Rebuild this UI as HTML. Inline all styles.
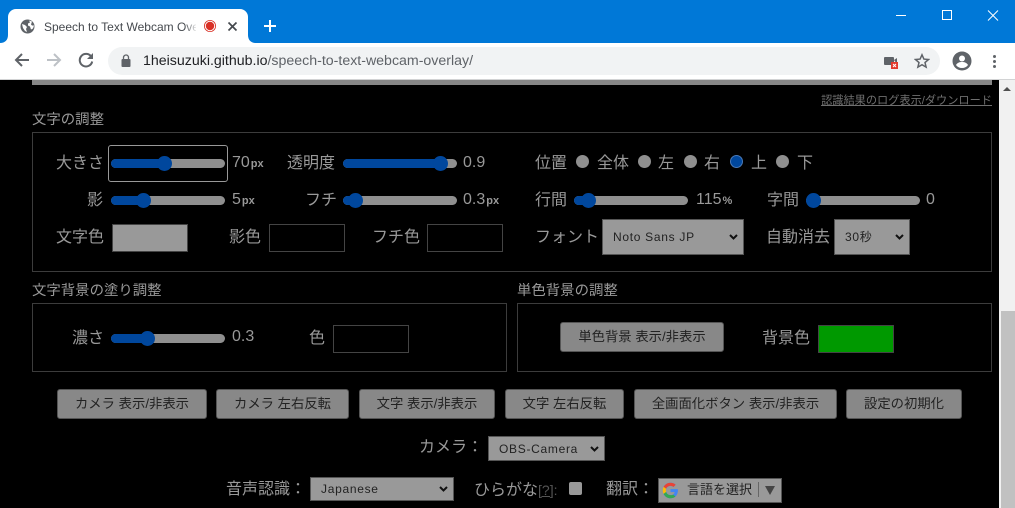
<!DOCTYPE html>
<html lang="ja"><head><meta charset="utf-8"><title>Speech to Text Webcam Overlay</title>
<style>
html,body{margin:0;padding:0;width:1015px;height:508px;overflow:hidden;background:#000}
body{position:relative;font-family:"Liberation Sans","Noto Sans CJK JP",sans-serif;color:#999}
.a{position:absolute}
.t{position:absolute;white-space:nowrap;height:20px;line-height:20px;font-size:16px;font-family:"Liberation Sans","Noto Sans CJK JP",sans-serif;color:#999}
.t small{font-size:11px;font-weight:bold;margin-left:1px}
.h{font-size:14.4px}
.p{position:absolute;border:1px solid #3c3c3c;box-sizing:border-box}
.c{position:absolute;border:1px solid #444;box-sizing:border-box;width:76px;height:28px}
.tr{position:absolute;height:9px;border-radius:5px;background:#8f8f8f;overflow:hidden}
.tr i{position:absolute;left:0;top:0;bottom:0;background:#00479d}
.th{position:absolute;width:15px;height:15px;border-radius:50%;background:#00479d}
.r{position:absolute;width:13px;height:13px;border-radius:50%;background:#8f8f8f}
.b{position:absolute;box-sizing:border-box;height:30px;line-height:28px;text-align:center;background:#888;border:1px solid #555;border-radius:3px;color:#222;font-size:13.33px;white-space:nowrap}
.s{position:absolute;box-sizing:border-box;background:#999;border:1px solid #555;color:#222;font-size:12px;letter-spacing:.7px;white-space:nowrap}
.s svg{position:absolute;top:50%;margin-top:-3px;right:5px}
</style></head><body>
<!-- browser chrome -->
<div class="a" style="left:0;top:0;width:1015px;height:43px;background:#0078d7"></div>
<div class="a" style="left:8px;top:9px;width:240px;height:34px;background:#fff;border-radius:8px 8px 0 0"></div>
<svg class="a" style="left:0;top:35px" width="8" height="8"><path d="M0 8H8V0C8 5 5 8 0 8Z" fill="#fff"/></svg>
<svg class="a" style="left:248px;top:35px" width="8" height="8"><path d="M0 0V8H8C3 8 0 5 0 0Z" fill="#fff"/></svg>
<svg class="a" style="left:20px;top:19px" width="15" height="15" viewBox="0 0 15 15"><circle cx="7.500" cy="7.500" r="7" fill="#5f6368"/><path d="M2 5l3 1 2 2-1 2 1 3-2-1-2-3zM9 1.500l3 1-1 3 1 1 2 0-1 3-2 1-1-3-2-1 0-2 2-1z" fill="#fff"/></svg>
<div class="a" style="left:44px;top:19px;width:152px;height:16px;overflow:hidden;font-size:12px;line-height:16px;color:#45494e;white-space:nowrap">Speech to Text Webcam Overlay</div>
<div class="a" style="left:184px;top:19px;width:14px;height:16px;background:linear-gradient(90deg,rgba(255,255,255,0),#fff)"></div>
<svg class="a" style="left:203px;top:19px" width="14" height="14"><circle cx="7" cy="7" r="6" fill="#d93025"/><circle cx="7" cy="7" r="4.700" fill="none" stroke="#fff" stroke-width="1"/></svg>
<svg class="a" style="left:227px;top:21px" width="11" height="11"><path d="M1.500 1.500l8 8M9.500 1.500l-8 8" stroke="#45494e" stroke-width="1.700"/></svg>
<svg class="a" style="left:263px;top:19px" width="14" height="14"><path d="M7 1v12M1 7h12" stroke="#fff" stroke-width="2"/></svg>
<svg class="a" style="left:895px;top:9px" width="110" height="14" fill="none" stroke="#fff" stroke-width="1"><path d="M1 6.500h10M47.500 1.500h9v9h-9zM93 1.500l10 10M103 1.500l-10 10"/></svg>
<div class="a" style="left:0;top:43px;width:1015px;height:36px;background:#fff"></div>
<div class="a" style="left:0;top:79px;width:1015px;height:1px;background:#d2d3d4"></div>
<svg class="a" style="left:14px;top:52px" width="16" height="16" fill="none" stroke="#5f6368" stroke-width="2"><path d="M15 8H2M8 2L2 8l6 6"/></svg>
<svg class="a" style="left:46px;top:52px" width="16" height="16" fill="none" stroke="#bdc1c6" stroke-width="2"><path d="M1 8h13M8 2l6 6-6 6"/></svg>
<svg class="a" style="left:78px;top:52px" width="16" height="16" fill="none"><path d="M13.500 5A6.300 6.300 0 1 0 14.200 9.500" stroke="#5f6368" stroke-width="2"/><path d="M15 1v6H9z" fill="#5f6368"/></svg>
<div class="a" style="left:108px;top:47px;width:832px;height:28px;background:#f1f3f4;border-radius:14px"></div>
<svg class="a" style="left:121px;top:54px" width="10" height="13"><rect x="0.500" y="5" width="9" height="8" rx="1" fill="#5f6368"/><path d="M2.500 5V3.500a2.500 2.500 0 0 1 5 0V5" fill="none" stroke="#5f6368" stroke-width="1.300"/></svg>
<div class="a" style="left:143px;top:52px;font-size:14.18px;line-height:18px;white-space:nowrap;color:#5f6368"><span style="color:#202124">1heisuzuki.github.io</span>/speech-to-text-webcam-overlay/</div>
<svg class="a" style="left:883px;top:56px" width="16" height="14"><rect x="1" y="1" width="10" height="8" rx="1" fill="#5f6368"/><path d="M11 4l3-2v6" fill="#5f6368"/><rect x="8" y="6" width="7" height="7" fill="#e33b2e"/><path d="M10 8l3 3M13 8l-3 3" stroke="#fff"/></svg>
<svg class="a" style="left:914px;top:53px" width="16" height="16"><path d="M8 1.800l1.900 4.300 4.600.4-3.500 3 1.100 4.600L8 11.700 3.900 14.100 5 9.500 1.500 6.500l4.600-.4z" fill="none" stroke="#5f6368" stroke-width="1.500"/></svg>
<svg class="a" style="left:952px;top:51px" width="20" height="20"><circle cx="10" cy="10" r="9.500" fill="#5f6368"/><circle cx="10" cy="7.500" r="3" fill="#fff"/><path d="M4 14c1.500-2.500 3.500-3 6-3s4.500.5 6 3c-1.500 2-3.500 3-6 3s-4.500-1-6-3z" fill="#fff"/></svg>
<svg class="a" style="left:992px;top:54px" width="5" height="15" fill="#5f6368"><circle cx="2.500" cy="2.500" r="1.500"/><circle cx="2.500" cy="7.500" r="1.500"/><circle cx="2.500" cy="12.500" r="1.500"/></svg>
<!-- scrollbar -->
<div class="a" style="left:999px;top:80px;width:16px;height:428px;background:#f1f1f1"></div>
<div class="a" style="left:1001px;top:311px;width:14px;height:197px;background:#c1c1c1"></div>
<svg class="a" style="left:1003px;top:86px" width="9" height="6"><path d="M0 5L4 1l4 4z" fill="#505050"/></svg>
<!-- page -->
<div class="a" style="left:32px;top:80px;width:960px;height:5px;background:#878787"></div>
<div class="t" style="right:23px;top:92px;font-size:11.2px;color:#6f6f6f;text-decoration:underline;height:18px;line-height:18px">認識結果のログ表示/ダウンロード</div>
<div class="t h" style="left:32px;top:110px">文字の調整</div>
<div class="p" style="left:32px;top:132px;width:960px;height:140px"></div>
<div class="a" style="left:108px;top:145px;width:120px;height:37px;box-sizing:border-box;border:1px solid #999;border-radius:3px"></div>
<div class="t" style="left:56px;top:154px">大きさ</div>
<div class="tr" style="left:111px;top:159px;width:114px"><i style="width:53px"></i></div><div class="th" style="left:157px;top:156px"></div>
<div class="t" style="left:232px;top:153px">70<small>px</small></div>
<div class="t" style="left:287px;top:154px">透明度</div>
<div class="tr" style="left:343px;top:159px;width:114px"><i style="width:97px"></i></div><div class="th" style="left:433px;top:156px"></div>
<div class="t" style="left:463px;top:153px">0.9</div>
<div class="t" style="left:535px;top:154px">位置</div>
<div class="r" style="left:576px;top:155px"></div><div class="t" style="left:597px;top:154px">全体</div>
<div class="r" style="left:638px;top:155px"></div><div class="t" style="left:658px;top:154px">左</div>
<div class="r" style="left:684px;top:155px"></div><div class="t" style="left:704px;top:154px">右</div>
<div class="a" style="left:730px;top:155px;width:13px;height:13px;box-sizing:border-box;border-radius:50%;background:#00479d;border:1.500px solid #4a7ab8"></div><div class="t" style="left:751px;top:154px">上</div>
<div class="r" style="left:776px;top:155px"></div><div class="t" style="left:797px;top:154px">下</div>
<div class="t" style="left:87px;top:191px">影</div>
<div class="tr" style="left:111px;top:196px;width:114px"><i style="width:32px"></i></div><div class="th" style="left:136px;top:193px"></div>
<div class="t" style="left:232px;top:190px">5<small>px</small></div>
<div class="t" style="left:305px;top:191px">フチ</div>
<div class="tr" style="left:343px;top:196px;width:114px"><i style="width:13px"></i></div><div class="th" style="left:348px;top:193px"></div>
<div class="t" style="left:463px;top:190px">0.3<small>px</small></div>
<div class="t" style="left:535px;top:191px">行間</div>
<div class="tr" style="left:574px;top:196px;width:114px"><i style="width:15px"></i></div><div class="th" style="left:581px;top:193px"></div>
<div class="t" style="left:696px;top:190px">115<small>%</small></div>
<div class="t" style="left:767px;top:191px">字間</div>
<div class="tr" style="left:806px;top:196px;width:114px"></div><div class="th" style="left:806px;top:193px"></div>
<div class="t" style="left:926px;top:190px">0</div>
<div class="t" style="left:56px;top:228px">文字色</div>
<div class="c" style="left:112px;top:224px;background:#999"></div>
<div class="t" style="left:229px;top:228px">影色</div>
<div class="c" style="left:269px;top:224px"></div>
<div class="t" style="left:372px;top:228px">フチ色</div>
<div class="c" style="left:427px;top:224px"></div>
<div class="t" style="left:535px;top:228px">フォント</div>
<div class="s" style="left:602px;top:219px;width:142px;height:36px;line-height:35px;padding-left:10px">Noto Sans JP<svg width="9" height="6"><path d="M1 1l3.500 3.500L8 1" fill="none" stroke="#111" stroke-width="2"/></svg></div>
<div class="t" style="left:766px;top:228px">自動消去</div>
<div class="s" style="left:834px;top:219px;width:76px;height:36px;line-height:35px;padding-left:10px">30秒<svg width="9" height="6"><path d="M1 1l3.500 3.500L8 1" fill="none" stroke="#111" stroke-width="2"/></svg></div>
<div class="t h" style="left:32px;top:281px">文字背景の塗り調整</div>
<div class="t h" style="left:517px;top:281px">単色背景の調整</div>
<div class="p" style="left:32px;top:303px;width:475px;height:69px"></div>
<div class="p" style="left:517px;top:303px;width:475px;height:69px"></div>
<div class="t" style="left:72px;top:329px">濃さ</div>
<div class="tr" style="left:111px;top:334px;width:114px"><i style="width:37px"></i></div><div class="th" style="left:140px;top:331px"></div>
<div class="t" style="left:232px;top:327px">0.3</div>
<div class="t" style="left:309px;top:329px">色</div>
<div class="c" style="left:333px;top:325px"></div>
<div class="b" style="left:560px;top:322px;width:164px">単色背景 表示/非表示</div>
<div class="t" style="left:762px;top:329px">背景色</div>
<div class="c" style="left:818px;top:325px;background:#009900"></div>
<div class="b" style="left:57px;top:389px;width:150px">カメラ 表示/非表示</div>
<div class="b" style="left:216px;top:389px;width:133px">カメラ 左右反転</div>
<div class="b" style="left:359px;top:389px;width:136px">文字 表示/非表示</div>
<div class="b" style="left:505px;top:389px;width:119px">文字 左右反転</div>
<div class="b" style="left:634px;top:389px;width:203px">全画面化ボタン 表示/非表示</div>
<div class="b" style="left:846px;top:389px;width:116px">設定の初期化</div>
<div class="t" style="left:419px;top:438px">カメラ：</div>
<div class="s" style="left:488px;top:436px;width:117px;height:25px;line-height:24px;padding-left:10px">OBS-Camera<svg width="9" height="6"><path d="M1 1l3.500 3.500L8 1" fill="none" stroke="#111" stroke-width="2"/></svg></div>
<div class="t" style="left:226px;top:480px">音声認識：</div>
<div class="s" style="left:310px;top:477px;width:144px;height:24px;line-height:23px;padding-left:10px">Japanese<svg width="9" height="6"><path d="M1 1l3.500 3.500L8 1" fill="none" stroke="#111" stroke-width="2"/></svg></div>
<div class="t" style="left:474px;top:480px">ひらがな<span style="color:#555;font-size:14px"><u>[?]</u>:</span></div>
<div class="a" style="left:569px;top:482px;width:13px;height:13px;background:#999;border-radius:2px"></div>
<div class="t" style="left:606px;top:480px">翻訳：</div>
<div class="a" style="left:658px;top:478px;width:124px;height:25px;background:#999;border:1px solid #555;box-sizing:border-box"></div>
<svg class="a" style="left:662px;top:482px" width="17" height="17" viewBox="0 0 48 48"><path d="M24 20v8.500h11.800C34.600 34 30 37 24 37c-7.200 0-13-5.800-13-13s5.800-13 13-13c3.200 0 6 1.100 8.300 3l6.300-6.300C34.600 4.200 29.600 2 24 2 11.800 2 2 11.800 2 24s9.800 22 22 22c11 0 21-8 21-22 0-1.300-.2-2.700-.5-4z" fill="#4285f4"/><path d="M4.500 13.700l7.200 5.300C13.600 14.200 18.400 11 24 11c3.200 0 6 1.100 8.300 3l6.300-6.300C34.600 4.200 29.600 2 24 2 15.500 2 8.200 6.700 4.500 13.700z" fill="#ea4335"/><path d="M24 46c5.500 0 10.400-1.900 14.200-5.100l-6.600-5.400C29.600 36.800 27 37 24 37c-5.800 0-10.700-3.800-12.400-9.100l-7.100 5.500C8.100 40.800 15.500 46 24 46z" fill="#34a853"/><path d="M4.500 13.700C3 16.700 2 20.200 2 24s1 7 2.500 9.400l7.100-5.500C11.200 26.700 11 25.400 11 24s.3-3.500.7-5z" fill="#fbbc05"/></svg>
<div class="t" style="left:687px;top:480px;font-size:13px;color:#222;height:20px">言語を選択</div>
<div class="a" style="left:758px;top:482px;width:1px;height:15px;background:#666"></div>
<svg class="a" style="left:765px;top:486px" width="10" height="9"><path d="M0 0h10L5 9z" fill="#444"/></svg>
</body></html>
